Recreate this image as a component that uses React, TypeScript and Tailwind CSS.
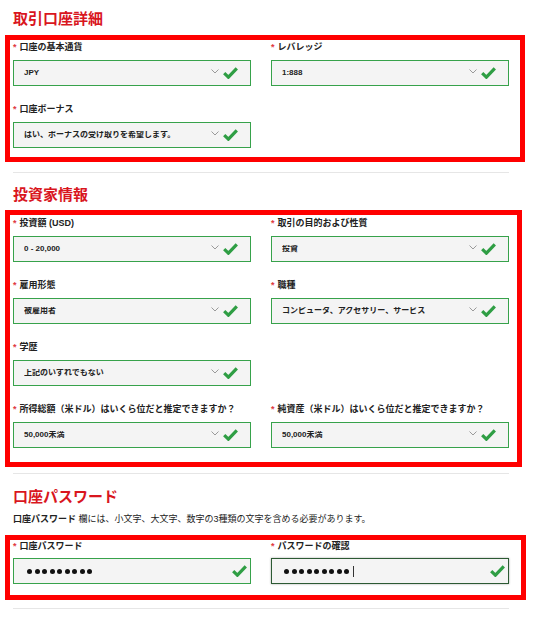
import React from "react";

const FONT = { fontFamily: '"Liberation Sans", "Noto Sans CJK JP", sans-serif' };

function Chevron() {
  return (
    <svg width="8" height="5" viewBox="0 0 8 5" className="mb-[3px] shrink-0">
      <polyline points="0.5,0.5 4,4 7.5,0.5" fill="none" stroke="#9a9a9a" strokeWidth="1" />
    </svg>
  );
}

function Check() {
  return (
    <svg width="15" height="12" viewBox="0 0 15 12" className="shrink-0">
      <path d="M1.2 6.2 L5.4 10.2 L13.8 1.4" fill="none" stroke="#2f9e44" strokeWidth="3.2" strokeLinejoin="miter" />
    </svg>
  );
}

function Label({ text, tight }: { text: string; tight?: boolean }) {
  return (
    <div className={`${tight ? "leading-[12px]" : "leading-[14px]"} text-[9px] font-bold text-[#222] whitespace-nowrap`}>
      <span className="text-[#e0393e] mr-[3px]">*</span>
      {text}
    </div>
  );
}

function SelectBox({ value }: { value: string }) {
  return (
    <div className="h-[26px] mt-[6px] border border-[#37a24b] bg-[#f4f4f4] flex items-center pl-[10px] pr-[12px]">
      <span className="flex-1 text-[8px] font-bold text-[#222] leading-none truncate">{value}</span>
      <Chevron />
      <span className="w-[4px]" />
      <Check />
    </div>
  );
}

function Field({ label, value }: { label: string; value: string }) {
  return (
    <div>
      <Label text={label} />
      <SelectBox value={value} />
    </div>
  );
}

function Dots({ caret }: { caret?: boolean }) {
  return (
    <div className="flex-1 flex items-center gap-[2.5px]">
      {Array.from({ length: 9 }).map((_, i) => (
        <span key={i} className="block w-[5px] h-[5px] rounded-full bg-[#111]" />
      ))}
      {caret && <span className="block w-px h-[11px] bg-[#333] ml-[1px]" />}
    </div>
  );
}

function Heading({ children }: { children: React.ReactNode }) {
  return <h2 className="text-[15px] leading-[20px] font-bold text-[#d9161e]">{children}</h2>;
}

export default function App() {
  return (
    <div className="w-[543px] h-[619px] bg-white overflow-hidden" style={FONT}>
      <div className="pl-[13px] pt-[9px] w-[509px]">
        <Heading>取引口座詳細</Heading>

        <div className="mt-[6px] -ml-[8px] w-[520px] border-[5px] border-[#ff0000] pl-[3px] pr-[11px] pb-[9px]">
          <div className="grid grid-cols-2 gap-x-[20px] gap-y-[16px]">
            <Field label="口座の基本通貨" value="JPY" />
            <Field label="レバレッジ" value="1:888" />
            <Field label="口座ボーナス" value="はい、ボーナスの受け取りを希望します。" />
          </div>
        </div>

        <div className="mt-[10px] h-px bg-[#e6e6e6]" />

        <div className="mt-[12px]">
          <Heading>投資家情報</Heading>
        </div>

        <div className="mt-[5px] -ml-[8px] w-[517px] border-[5px] border-[#ff0000] pl-[3px] pr-[8px] pt-[1px] pb-[14px]">
          <div className="grid grid-cols-2 gap-x-[20px] gap-y-[16px]">
            <Field label="投資額 (USD)" value="0 - 20,000" />
            <Field label="取引の目的および性質" value="投資" />
            <Field label="雇用形態" value="被雇用者" />
            <Field label="職種" value="コンピュータ、アクセサリー、サービス" />
            <Field label="学歴" value="上記のいずれでもない" />
            <div />
            <Field label="所得総額（米ドル）はいくら位だと推定できますか？" value="50,000未満" />
            <Field label="純資産（米ドル）はいくら位だと推定できますか？" value="50,000未満" />
          </div>
        </div>

        <div className="mt-[6px] h-px bg-[#e6e6e6]" />

        <div className="mt-[13px]">
          <Heading>口座パスワード</Heading>
        </div>
        <p className="mt-[5px] text-[9px] leading-[14px] text-[#222] whitespace-nowrap">
          <span className="font-bold">口座パスワード</span> 欄には、小文字、大文字、数字の3種類の文字を含める必要があります。
        </p>

        <div className="mt-[9px] -ml-[8px] w-[521px] border-[5px] border-[#ff0000] pl-[3px] pr-[12px] pb-[11px]">
          <div className="grid grid-cols-2 gap-x-[20px]">
            <div>
              <Label text="口座パスワード" tight />
              <div className="h-[26px] mt-[6px] border border-[#37a24b] bg-[#f4f4f4] flex items-center pl-[13px] pr-[3px]">
                <Dots />
                <Check />
              </div>
            </div>
            <div>
              <Label text="パスワードの確認" tight />
              <div className="h-[26px] mt-[6px] border border-[#2c5a33] bg-[#f4f4f4] shadow-[0_0_2px_rgba(0,0,0,0.35)] flex items-center pl-[12px] pr-[3px]">
                <Dots caret />
                <Check />
              </div>
            </div>
          </div>
        </div>

        <div className="mt-[8px] h-px bg-[#e6e6e6]" />
      </div>
    </div>
  );
}
